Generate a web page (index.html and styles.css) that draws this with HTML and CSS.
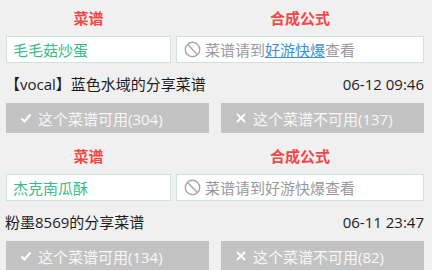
FILE: index.html
```html
<!DOCTYPE html>
<html lang="zh">
<head>
<meta charset="utf-8">
<link rel="stylesheet" href="styles.css">
</head>
<body>
<div class="list">
  <div class="card">
    <div class="fields">
      <div class="field field-name">
        <div class="label">菜谱</div>
        <div class="box name">毛毛菇炒蛋</div>
      </div>
      <div class="field field-formula">
        <div class="label">合成公式</div>
        <div class="box formula">
          <svg class="ban" viewBox="0 0 16 16" width="17" height="17"><circle cx="8" cy="8" r="6.8" fill="none" stroke="#a8a8a8" stroke-width="1.3"/><line x1="3.3" y1="3.3" x2="12.7" y2="12.7" stroke="#a8a8a8" stroke-width="1.3"/></svg>
          <span>菜谱请到<a class="link">好游快爆</a>查看</span>
        </div>
      </div>
    </div>
    <div class="meta">
      <span class="author">【vocal】蓝色水域的分享菜谱</span>
      <span class="date">06-12 09:46</span>
    </div>
    <div class="actions">
      <div class="btn">
        <svg class="ico" viewBox="0 0 12 12" width="12" height="12"><path d="M1.5 6.5 L4.5 9.5 L10.5 2.5" fill="none" stroke="#fff" stroke-width="2.2"/></svg>
        <span>这个菜谱可用(304)</span>
      </div>
      <div class="btn">
        <svg class="ico" viewBox="0 0 12 12" width="12" height="12"><path d="M2 2 L10 10 M10 2 L2 10" fill="none" stroke="#fff" stroke-width="1.8"/></svg>
        <span>这个菜谱不可用(137)</span>
      </div>
    </div>
  </div>
  <div class="card">
    <div class="fields">
      <div class="field field-name">
        <div class="label">菜谱</div>
        <div class="box name">杰克南瓜酥</div>
      </div>
      <div class="field field-formula">
        <div class="label">合成公式</div>
        <div class="box formula">
          <svg class="ban" viewBox="0 0 16 16" width="17" height="17"><circle cx="8" cy="8" r="6.8" fill="none" stroke="#a8a8a8" stroke-width="1.3"/><line x1="3.3" y1="3.3" x2="12.7" y2="12.7" stroke="#a8a8a8" stroke-width="1.3"/></svg>
          <span>菜谱请到好游快爆查看</span>
        </div>
      </div>
    </div>
    <div class="meta">
      <span class="author">粉墨8569的分享菜谱</span>
      <span class="date">06-11 23:47</span>
    </div>
    <div class="actions">
      <div class="btn">
        <svg class="ico" viewBox="0 0 12 12" width="12" height="12"><path d="M1.5 6.5 L4.5 9.5 L10.5 2.5" fill="none" stroke="#fff" stroke-width="2.2"/></svg>
        <span>这个菜谱可用(134)</span>
      </div>
      <div class="btn">
        <svg class="ico" viewBox="0 0 12 12" width="12" height="12"><path d="M2 2 L10 10 M10 2 L2 10" fill="none" stroke="#fff" stroke-width="1.8"/></svg>
        <span>这个菜谱不可用(82)</span>
      </div>
    </div>
  </div>
</div>
</body>
</html>
```
FILE: styles.css
```css
html, body {
  margin: 0;
  padding: 0;
  background: #f0f0f0;
}
body {
  font-family: "Open Sans", "Noto Sans CJK SC", sans-serif;
  color: #222;
  overflow: hidden;
}
.list {
  padding: 0 8px 0 6px;
}
.card {
  padding-top: 6px;
  height: 132px;
}
.fields {
  display: flex;
  gap: 5px;
}
.field-name { width: 165px; }
.field-formula { flex: 1; }
.label {
  text-align: center;
  color: #f24848;
  font-weight: bold;
  font-size: 15px;
  line-height: 24px;
  height: 24px;
  margin-bottom: 6px;
}
.box {
  box-sizing: border-box;
  height: 27px;
  background: #fff;
  border: 1px solid #cfe3da;
  display: flex;
  align-items: center;
  font-size: 15px;
  white-space: nowrap;
}
.name {
  color: #3dba8b;
  padding-left: 6px;
}
.formula {
  color: #9a9a9a;
  padding-left: 7px;
  gap: 4px;
}
.ban { flex: none; }
.link {
  color: #3a8fdc;
  text-decoration: underline;
}
.meta {
  height: 40px;
  display: flex;
  align-items: center;
  justify-content: space-between;
  font-size: 15px;
  color: #1e1e1e;
  padding-top: 1px;
  box-sizing: border-box;
}
.author { margin-left: -1px; }
.actions {
  display: flex;
  gap: 12px;
}
.btn {
  flex: 1;
  height: 30px;
  background: #c3c3c3;
  color: #f7f7f7;
  display: flex;
  align-items: center;
  font-size: 15px;
  padding-left: 14px;
  gap: 6px;
  white-space: nowrap;
}
.ico { flex: none; }
```
